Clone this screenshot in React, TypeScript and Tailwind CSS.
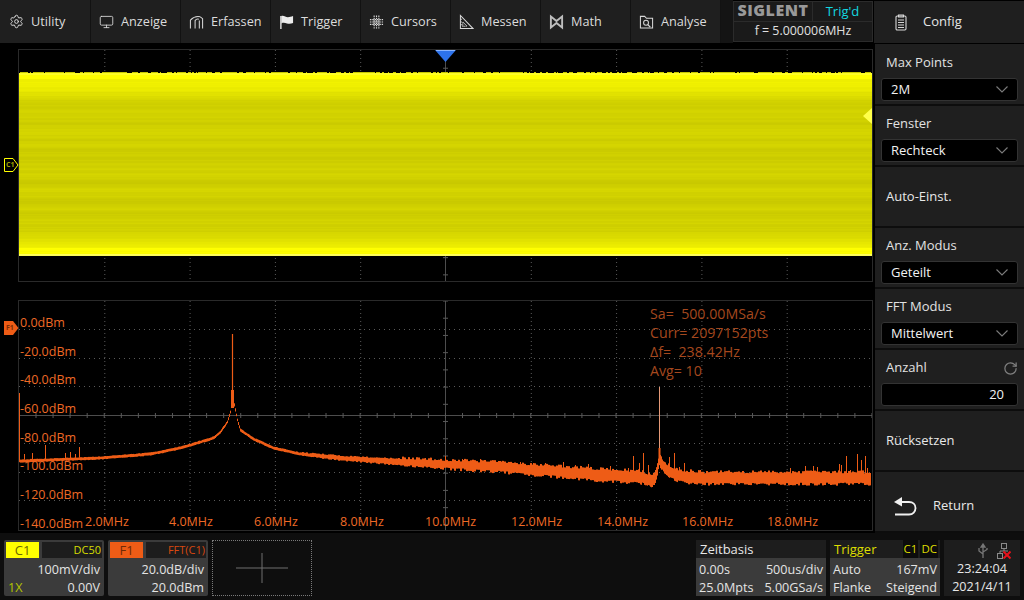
import React from "react";
import { Settings, Monitor, RotateCw } from "lucide-react";

function rng(seed: number) {
  let s = seed;
  return () => {
    s = (s * 1664525 + 1013904223) % 4294967296;
    return s / 4294967296;
  };
}

const PTS: number[][] = [[19,461],[100,458],[150,454],[180,448],[200,442],[213,438],[220,432],[227,422],[230,412],[232,398],[234,405],[237,420],[240,430],[253,439],[273,448],[300,454],[340,458],[400,462],[500,467],[600,475],[640,477],[648,480],[652,482],[655,476],[657,468],[659,460],[661,463],[664,468],[670,472],[680,476],[700,478],[872,478]];
function level(x: number) {
  for (let i = 0; i < PTS.length - 1; i++) {
    const [a, b] = PTS[i];
    const [c, d] = PTS[i + 1];
    if (x >= a && x <= c) return b + ((d - b) * (x - a)) / (c - a);
  }
  return 478;
}
function thick(x: number) {
  if (x < 300) return 1.2;
  if (x < 400) return 1.2 + ((x - 300) / 100) * 1.5;
  if (x < 600) return 2.7 + ((x - 400) / 200) * 2;
  return 4.7;
}
const SPIKES: number[][] = [[45,445],[79,447],[24,454],[32,453],[65,453],[70,452],[75,454],[425,458],[445,456],[452,460],[462,459],[480,459],[491,461],[500,461],[520,462],[533,463],[545,463],[563,462],[575,465],[588,464],[610,466],[628,468],[633,456],[639,463],[643,453],[648,465],[655,470],[669,457],[674,453],[679,467],[684,463],[700,470],[790,468],[805,466],[813,466],[817,467],[839,464],[841,465],[846,456],[850,470],[857,454],[861,460],[865,456],[867,468]];

function buildTrace() {
  const r = rng(7);
  let d = "";
  let a = 0;
  let b = 0;
  for (let x = 19; x < 871; x++) {
    const l = level(x);
    const t = thick(x);
    const amp = x > 400 ? 3 : x > 300 ? 1.2 : 0.5;
    if (x % 2 === 0) {
      a = r() * amp;
      b = r() * amp;
    }
    d += `M${x + 0.5} ${(l - t - a).toFixed(1)}V${(l + t + b).toFixed(1)}`;
  }
  for (const [x, y] of SPIKES) d += `M${x + 0.5} ${y}V${level(x) - 1}`;
  return d;
}
const TRACE = buildTrace();

function buildStripes() {
  const r = rng(41);
  const out: { y: number; c: string }[] = [];
  let walk = 0;
  for (let y = 73; y < 256; y++) {
    const dTop = y - 73;
    const dBot = 255 - y;
    walk = walk * 0.6 + (r() - 0.5) * 9;
    let base = 208;
    if (dTop < 30) base = 255 - (dTop / 30) * 47;
    if (dBot < 26) base = 255 - (dBot / 26) * 47;
    if (dTop < 6 || dBot < 8) base = 255;
    const v = Math.min(255, Math.round(base + walk));
    const blue = dBot < 2 ? 90 : dTop < 2 ? 40 : 0;
    out.push({ y, c: `rgb(${v},${v},${blue})` });
  }
  return out;
}
const STRIPES = buildStripes();

function buildNoise() {
  const r = rng(99);
  let d = "";
  for (let x = 20; x < 870; x += 1 + Math.floor(r() * 7)) {
    d += `M${x} 72.5h${1 + Math.floor(r() * 6)}`;
  }
  return d;
}
const NOISE = buildNoise();

const VX = [104.8, 190.1, 275.4, 360.7, 531.3, 616.6, 701.9, 787.2];

function Grid({ top, h, cy, lines }: { top: number; h: number; cy: number; lines: number[] }) {
  const ticksH: number[] = [];
  for (let x = 19 + 17; x < 872; x += 17.06) ticksH.push(x);
  const ticksV: number[] = [];
  for (let y = cy - 114; y < cy + 115; y += 5.74 * 3) ticksV.push(y);
  return (
    <>
      {VX.map((x) => (
        <line key={x} x1={x} x2={x} y1={top} y2={top + h} stroke="#5a5a5a" strokeDasharray="1 3" />
      ))}
      {lines.map((y) => (
        <line key={y} x1={19} x2={872} y1={y + 0.5} y2={y + 0.5} stroke="#5a5a5a" strokeDasharray="1 4" />
      ))}
      <line x1={445.5} x2={445.5} y1={top} y2={top + h} stroke="#4d4d4d" />
      <line x1={19} x2={872} y1={cy + 0.5} y2={cy + 0.5} stroke="#4d4d4d" />
      {ticksH.map((x) => (
        <line key={x} x1={x} x2={x} y1={cy - 2} y2={cy + 3} stroke="#5a5a5a" />
      ))}
      {ticksV.map((y) => (
        <line key={y} x1={443} x2={448} y1={y} y2={y} stroke="#5a5a5a" />
      ))}
    </>
  );
}

const DB = [
  ["0.0dBm", 323],
  ["-20.0dBm", 352],
  ["-40.0dBm", 380],
  ["-60.0dBm", 409],
  ["-80.0dBm", 438],
  ["-100.0dBm", 466],
  ["-120.0dBm", 495],
  ["-140.0dBm", 524],
] as const;
const MHZ = [
  ["2.0MHz", 85],
  ["4.0MHz", 169],
  ["6.0MHz", 254],
  ["8.0MHz", 340],
  ["10.0MHz", 425],
  ["12.0MHz", 511],
  ["14.0MHz", 597],
  ["16.0MHz", 682],
  ["18.0MHz", 767],
] as const;

const I = "#d8d8d8";
function MenuIcon({ name }: { name: string }) {
  const p = { width: 15, height: 16, viewBox: "0 0 16 16", fill: "none", stroke: I, strokeWidth: 1.1 };
  switch (name) {
    case "Utility":
      return <Settings size={15} color={I} strokeWidth={1.6} />;
    case "Anzeige":
      return <Monitor size={16} color={I} strokeWidth={1.4} />;
    case "Erfassen":
      return (
        <svg {...p}>
          <path d="M1.5 15V6C4 3.5 8 1.5 12 2.5" />
          <path d="M6.5 15V6.5C7.5 5 9 4.5 10.5 5" />
          <path d="M11 15V6.5" />
          <path d="M14.5 15V4.5L12 2.5" />
        </svg>
      );
    case "Trigger":
      return (
        <svg {...p}>
          <path d="M2 1.5V15.5" strokeWidth={1.6} />
          <path d="M2.5 1.5C5 .5 7 2.8 9.5 2.8C11.5 2.8 13 2.2 15 1.5V9C13 10 10.5 10 8.5 9.5C6.5 9 4.5 8.5 2.5 9.5Z" fill="#ececec" stroke="none" />
        </svg>
      );
    case "Cursors":
      return (
        <svg {...p} strokeDasharray="1.6 .9" strokeWidth={1.2}>
          <path d="M5.5 1V15M10.5 1V15M1 5.5H15M1 10.5H15M8 1V15M1 8H15" />
        </svg>
      );
    case "Messen":
      return (
        <svg {...p}>
          <path d="M1.5 15V1L15 15Z" />
          <path d="M4 12.5V8L8.5 12.5Z" strokeDasharray="1 .6" />
          <path d="M1.5 5H3M1.5 8H3M1.5 11H3" />
        </svg>
      );
    case "Math":
      return (
        <svg {...p} stroke="#bdbdbd" strokeWidth={2}>
          <path d="M2 2.2L8 7L14 2.2V13.8L8 9L2 13.8Z" />
        </svg>
      );
    default:
      return (
        <svg {...p}>
          <path d="M1.5 14.5V2H6L8 4H14.5V14.5Z" />
          <circle cx={7.5} cy={8.8} r={2.6} />
          <path d="M9.4 10.8L12 13.5" strokeWidth={1.4} />
        </svg>
      );
  }
}

const MENU = ["Utility", "Anzeige", "Erfassen", "Trigger", "Cursors", "Messen", "Math", "Analyse"];

function Chevron() {
  return (
    <svg width="12" height="7" viewBox="0 0 12 7" fill="none" stroke="#7c7c7c" strokeWidth={1.1}>
      <path d="M.5 .5L6 6L11.5 .5" />
    </svg>
  );
}

function SelectRow({ label, value }: { label: string; value: string }) {
  return (
    <div className="h-[61px] shrink-0 border-b-2 border-[#0d0d0d] px-[6px]">
      <div className="h-[33px] pl-[5px] pt-[8px] text-[13px] leading-[18px] text-[#e2e2e2]">{label}</div>
      <div className="flex h-[23px] w-[137px] items-center justify-between rounded-[3px] border border-[#333333] bg-black pl-[9px] pr-[9px] text-[13px] text-[#f2f2f2]">
        <span>{value}</span>
        <Chevron />
      </div>
    </div>
  );
}

function ButtonRow({ label }: { label: string }) {
  return (
    <div className="flex h-[61px] shrink-0 items-center border-b-2 border-[#0d0d0d] pl-[11px] text-[13px] text-[#e8e8e8]">
      {label}
    </div>
  );
}

function ChannelCard(props: {
  tag: string;
  tagClass: string;
  coupling: string;
  couplingClass: string;
  rowOne: string;
  left?: string;
  rowTwo: string;
}) {
  return (
    <div className="flex h-[56px] w-[100px] flex-col rounded-[2px] bg-[#3b3b3b] p-[2px] text-[12.6px] leading-[18px]">
      <div className="flex h-[16px] gap-[3px]">
        <div className={`flex h-[16px] w-[33px] items-center justify-center text-[13px] ${props.tagClass}`}>{props.tag}</div>
        <div className={`flex h-[16px] flex-1 items-center justify-end bg-[#1d1d1d] pr-[1px] text-[11px] ${props.couplingClass}`}>
          {props.coupling}
        </div>
      </div>
      <div className="mt-[3px] pr-[2px] text-right text-[#e4e4e4]">{props.rowOne}</div>
      <div className="flex justify-between pl-[2px] pr-[2px] text-[#e4e4e4]">
        <span className="text-[#b4c400]">{props.left}</span>
        <span>{props.rowTwo}</span>
      </div>
    </div>
  );
}

export default function App() {
  return (
    <div className="flex h-[600px] w-[1024px] flex-col overflow-hidden bg-black font-['Open_Sans','Noto_Sans',sans-serif] text-[13px] text-[#e4e4e4]">
      {/* top bar */}
      <div className="flex h-[44px] shrink-0">
        <div className="flex h-[43px] bg-[#1f1f1f] pl-[1px] text-[12.7px]">
          {MENU.map((m) => (
            <div key={m} className="flex w-[90px] items-center gap-[7px] border-r border-[#121212] pl-[8px] text-[#dcdcdc]">
              <span className="flex w-[15px] justify-center"><MenuIcon name={m} /></span>
              <span>{m}</span>
            </div>
          ))}
        </div>
        <div className="w-[12px] bg-[#141414] h-[43px]" />
        <div className="mt-[1px] flex h-[41px] w-[140px] flex-col border border-[#2b2b2b] bg-[#1a1a1a]">
          <div className="flex h-[20px] border-b border-[#2b2b2b]">
            <div className="flex w-[79px] items-center justify-center border-r border-[#2b2b2b] pb-[3px] text-[16px] font-extrabold tracking-[0.5px] text-[#999999]">SIGLENT</div>
            <div className="flex flex-1 items-center justify-center text-[13px] text-[#12d8e0]">Trig'd</div>
          </div>
          <div className="flex flex-1 items-center justify-center text-[12.4px] text-[#e0e0e0]">f = 5.000006MHz</div>
        </div>
        <div className="mt-[1px] ml-[1px] flex h-[42px] flex-1 items-center bg-[#1f1f1f] pl-[20px]">
          <svg width="14" height="17" viewBox="0 0 14 17" fill="none" stroke="#d8d8d8" strokeWidth={1.1}>
            <rect x="2" y="2" width="10" height="14" rx="1.2" />
            <path d="M4.5 1H9.5V3H4.5ZM4 6H10M4 8.5H10M4 11H10M4 13.5H10" />
          </svg>
          <span className="ml-[15px] text-[13px] text-[#e6e6e6]">Config</span>
        </div>
      </div>

      {/* middle */}
      <div className="flex h-[489px] shrink-0">
        <div className="relative w-[875px] shrink-0 pl-[18px] pt-[5px] text-[12.5px]">
          {/* time-domain panel */}
          <div className="relative h-[233px] w-[855px] border border-[#2a2a2a]">
            <svg className="block" width="853" height="231" viewBox="19 50 853 231">
              <Grid top={50} h={231} cy={165} lines={[79, 108, 137, 194, 223, 252]} />
              <path d={NOISE} stroke="#c9c900" strokeWidth={1} />
              {STRIPES.map((s) => (
                <rect key={s.y} x={19} y={s.y} width={853} height={1} fill={s.c} shapeRendering="crispEdges" />
              ))}
              <path d="M435 50H456L445.5 62Z" fill="#2d72ea" />
              <path d="M436 50.5H455" stroke="#8ab4ff" />
              <path d="M872 108V124L863 116Z" fill="#ffff4a" />
            </svg>
            <div className="absolute left-[-15px] top-[108px] flex h-[14px] w-[15px] items-center">
              <svg width="15" height="14" viewBox="0 0 15 14" fill="none">
                <path d="M.5 .5H9L14 7L9 13.5H.5Z" stroke="#ffff00" />
              </svg>
              <span className="absolute left-[2px] top-[1px] text-[7px] leading-[12px] font-bold text-[#a0a000]">C1</span>
            </div>
          </div>
          {/* FFT panel */}
          <div className="relative mt-[18px] h-[231px] w-[855px] border border-[#2a2a2a]">
            <svg className="block" width="853" height="229" viewBox="19 301 853 229">
              <Grid top={301} h={229} cy={415} lines={[329, 358, 386, 443, 472, 500]} />
              <path d={TRACE} stroke="#ee5c16" strokeWidth={1} fill="none" />
              <path d="M19.5 393V460" stroke="#ee5c16" />
              <path d="M232.5 334V402" stroke="#ee5c16" strokeWidth={1.2} />
              <path d="M232.5 390V408" stroke="#ee5c16" strokeWidth={3} />
              <path d="M659.5 387V462" stroke="#e59a78" />
              <path d="M659.5 448V464" stroke="#ee5c16" strokeWidth={2} />
            </svg>
            {DB.map(([t, y]) => (
              <span key={t} className="absolute left-[1px] leading-[16px] text-[#ee6a26]" style={{ top: y - 309 }}>{t}</span>
            ))}
            {MHZ.map(([t, x]) => (
              <span key={t} className="absolute top-[213px] leading-[16px] text-[#ee6a26]" style={{ left: x - 19 }}>{t}</span>
            ))}
            <div className="absolute left-[631px] top-[3px] text-[14.2px] leading-[19px] whitespace-pre text-[#a5481e]">
              <div>{"Sa=  500.00MSa/s"}</div>
              <div>{"Curr= 2097152pts"}</div>
              <div>{"Δf=  238.42Hz"}</div>
              <div>{"Avg= 10"}</div>
            </div>
            <div className="absolute left-[-15px] top-[20px] flex h-[14px] w-[15px] items-center">
              <svg width="15" height="14" viewBox="0 0 15 14">
                <path d="M0 0H9L14.5 7L9 14H0Z" fill="#ee5c16" />
              </svg>
              <span className="absolute left-[2px] top-[1px] text-[7px] leading-[12px] font-bold text-[#7a2c05]">F1</span>
            </div>
          </div>
        </div>

        {/* right panel */}
        <div className="flex h-[489px] w-[149px] shrink-0 flex-col bg-[#1f1f1f] pt-[1px]">
          <SelectRow label="Max Points" value="2M" />
          <SelectRow label="Fenster" value="Rechteck" />
          <ButtonRow label="Auto-Einst." />
          <SelectRow label="Anz. Modus" value="Geteilt" />
          <SelectRow label="FFT Modus" value="Mittelwert" />
          <div className="h-[61px] shrink-0 border-b-2 border-[#0d0d0d] px-[6px]">
            <div className="flex h-[33px] items-center justify-between pl-[5px] pt-[3px] text-[#e2e2e2]">
              <span>Anzahl</span>
              <RotateCw size={15} color="#808080" strokeWidth={2} />
            </div>
            <div className="flex h-[23px] w-[137px] items-center justify-end rounded-[3px] border border-[#333333] bg-black pr-[13px] text-[#f2f2f2]">20</div>
          </div>
          <ButtonRow label="Rücksetzen" />
          <div className="flex h-[61px] shrink-0 items-center border-b-2 border-[#0d0d0d] pl-[18px] pt-[9px] text-[#e8e8e8]">
            <svg width="24" height="20" viewBox="0 0 24 20" fill="none" stroke="#f0f0f0" strokeWidth={1.8}>
              <path d="M9 1L1 6L9 10.5Z" fill="#f0f0f0" stroke="none" />
              <path d="M8 6H16C20 6 22.5 8.5 22.5 12C22.5 15.5 20 18.5 16 18.5H2" />
            </svg>
            <span className="ml-[16px]">Return</span>
          </div>
        </div>
      </div>

      {/* bottom bar */}
      <div className="flex flex-1 gap-[4px] bg-[#0e0e0e] pl-[4px] pr-[4px] pt-[7px] text-[12.6px]">
        <ChannelCard tag="C1" tagClass="bg-[#ffff00] text-[#6a6a00]" coupling="DC50" couplingClass="text-[#d6de00]" rowOne="100mV/div" left="1X" rowTwo="0.00V" />
        <ChannelCard tag="F1" tagClass="bg-[#ee5c16] text-[#702a06]" coupling="FFT(C1)" couplingClass="text-[#d8480f]" rowOne="20.0dB/div" rowTwo="20.0dBm" />
        <div className="flex h-[56px] w-[100px] items-center justify-center border border-dotted border-[#7a7a7a]">
          <svg width="52" height="30" viewBox="0 0 52 30" stroke="#6e6e6e">
            <path d="M0 15H52M26 0V30" />
          </svg>
        </div>
        <div className="ml-[380px] flex h-[56px] w-[130px] flex-col bg-[#3b3b3b] leading-[18px]">
          <div className="flex h-[18px] items-center bg-[#1d1d1d] pl-[4px] text-[13px] text-[#e8e8e8]">Zeitbasis</div>
          <div className="flex justify-between px-[3px] pt-[3px]"><span>0.00s</span><span>500us/div</span></div>
          <div className="flex justify-between px-[3px]"><span>25.0Mpts</span><span>5.00GSa/s</span></div>
        </div>
        <div className="flex h-[56px] w-[110px] flex-col bg-[#3b3b3b] leading-[18px]">
          <div className="flex h-[18px] items-center justify-between bg-[#1d1d1d] pl-[4px] pr-[2px] text-[13px] text-[#dede00]">
            <span>Trigger</span>
            <span className="flex gap-[2px] text-[11.5px]">
              <span className="bg-[#0c0c0c] px-[1px]">C1</span>
              <span className="bg-[#0c0c0c] px-[1px]">DC</span>
            </span>
          </div>
          <div className="flex justify-between px-[3px] pt-[3px]"><span>Auto</span><span>167mV</span></div>
          <div className="flex justify-between px-[3px]"><span>Flanke</span><span>Steigend</span></div>
        </div>
        <div className="flex h-[56px] w-[76px] flex-col items-center bg-[#1d1d1d] leading-[18px]">
          <div className="flex h-[20px] w-full items-center justify-end gap-[8px] pr-[9px] pt-[2px]">
            <svg width="12" height="16" viewBox="0 0 12 16" fill="none" stroke="#767676" strokeWidth={1.3}>
              <path d="M6 1V15M6 1L4 4H8ZM6 11L2 8V5M6 9L10 6.5V5" />
            </svg>
            <svg width="14" height="16" viewBox="0 0 14 16" fill="none" stroke="#8a8a8a">
              <rect x="4.5" y=".5" width="5" height="5" />
              <rect x=".5" y="10.5" width="5" height="5" />
              <path d="M7 5.5V8H3V10.5M7 8H11" />
              <path d="M6.5 8.5L13.5 15.5M13.5 8.5L6.5 15.5" stroke="#e8101a" strokeWidth={2} />
            </svg>
          </div>
          <div className="mt-[1px] text-[#e8e8e8]">23:24:04</div>
          <div className="text-[#e8e8e8]">2021/4/11</div>
        </div>
      </div>
    </div>
  );
}
